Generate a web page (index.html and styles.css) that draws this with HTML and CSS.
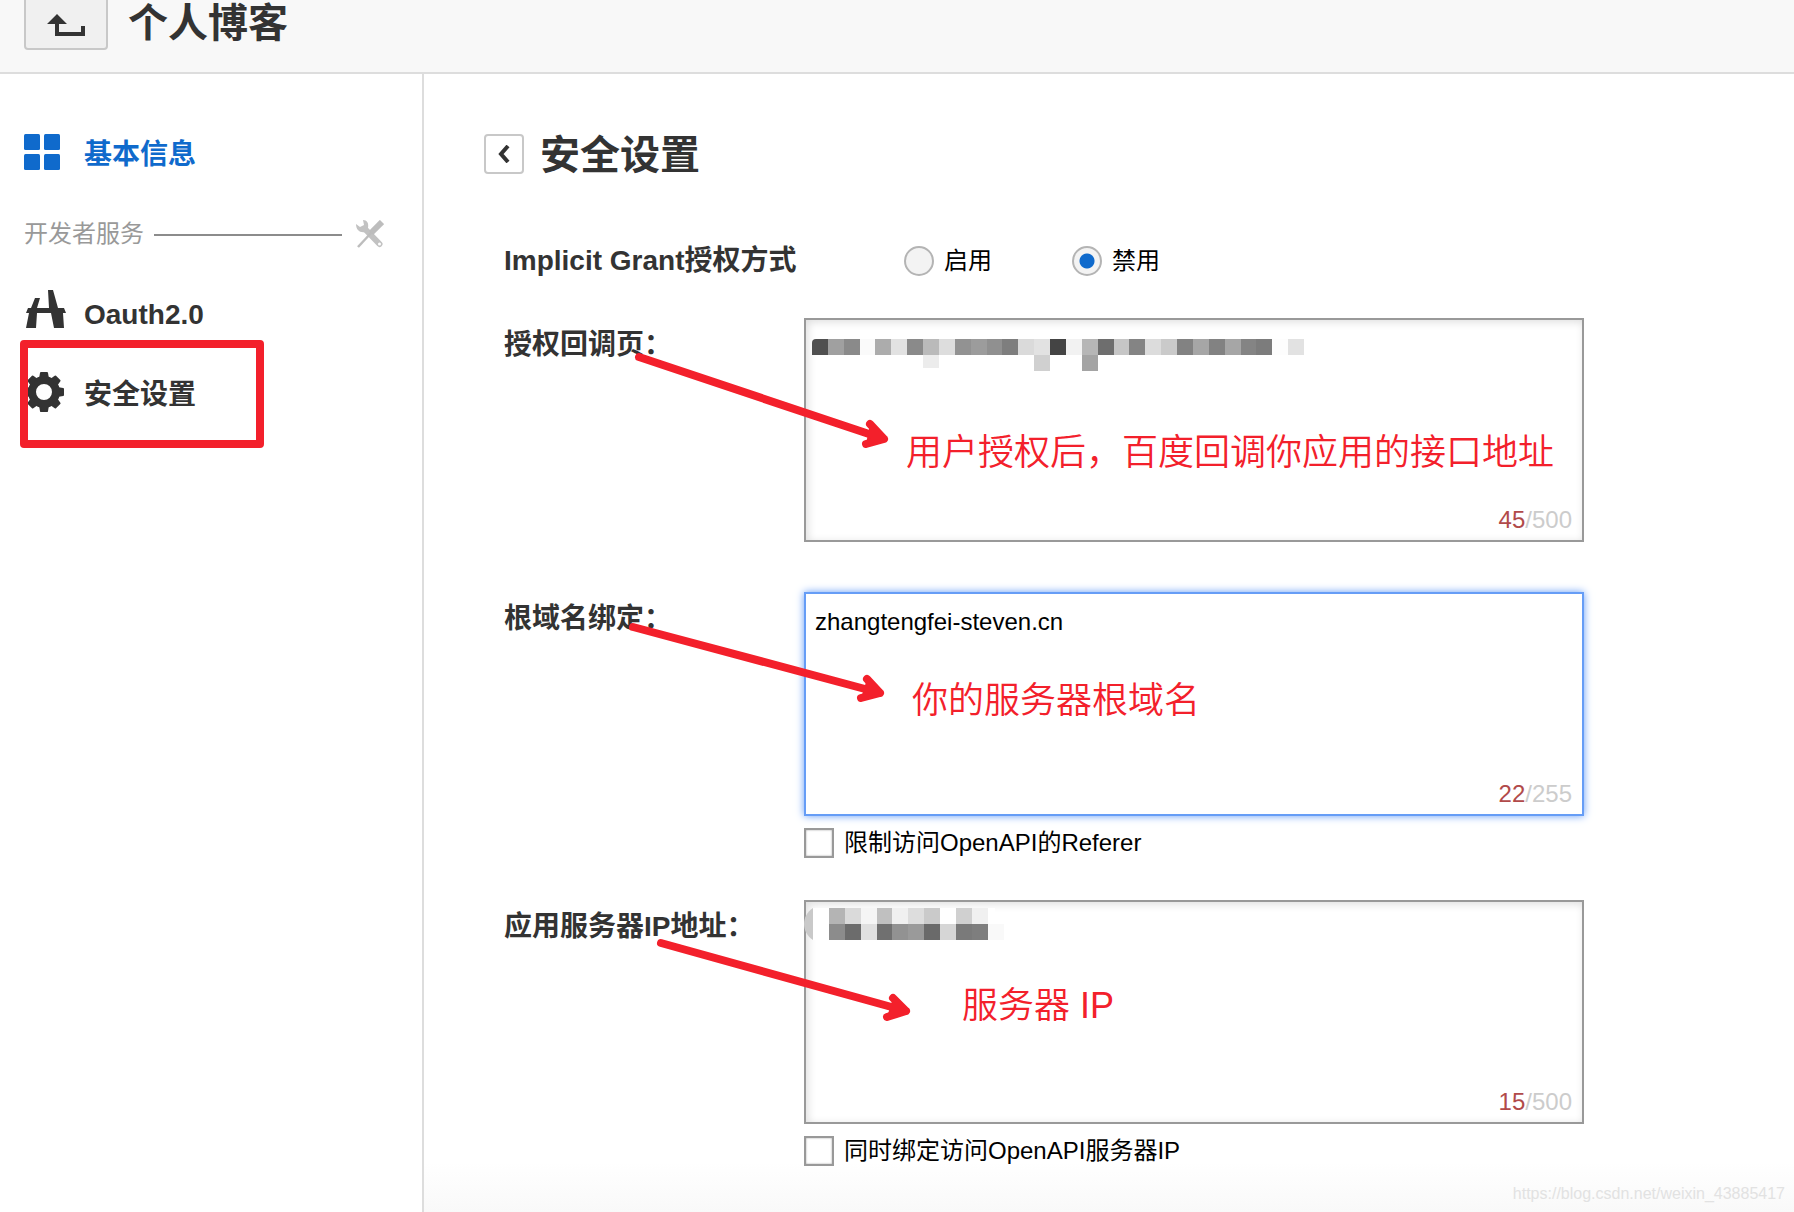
FILE: index.html
```html
<!DOCTYPE html>
<html lang="zh-CN">
<head>
<meta charset="utf-8">
<meta name="viewport" content="width=device-width, initial-scale=1">
<title>个人博客 - 安全设置</title>
<link rel="stylesheet" href="styles.css">
</head>
<body>
<header class="topbar">
  <button class="up-button" type="button" aria-label="返回上级">
    <svg width="38" height="22" viewBox="0 0 38 22" aria-hidden="true">
      <path d="M0 10 10 0l10 10h-8v8h22v-6H38v10H8V10z" fill="#333"/>
    </svg>
  </button>
  <h1 class="app-title">个人博客</h1>
</header>

<div class="layout">
  <nav class="sidebar">
    <a class="nav-item nav-item-active" href="#basic">
      <svg class="nav-icon" viewBox="0 0 48 48" aria-hidden="true" fill="#0f6acc">
        <rect x="0" y="4" width="16" height="16" rx="1.500"/>
        <rect x="20" y="4" width="16" height="16" rx="1.500"/>
        <rect x="0" y="24" width="16" height="16" rx="1.500"/>
        <rect x="20" y="24" width="16" height="16" rx="1.500"/>
      </svg>
      <span class="nav-text">基本信息</span>
    </a>
    <div class="nav-section">
      <span>开发者服务</span>
      <span class="nav-rule"></span>
      <svg width="28" height="28" viewBox="0 0 28 28" aria-hidden="true">
        <path d="M9 9 23.500 24" stroke="#c2c2c2" stroke-width="6" stroke-linecap="round"/>
        <path d="M0 4l4 3 4-2-1-5c4 0 6 3 5 8l-3 4C4 13 0 10 0 4z" fill="#c2c2c2"/>
        <circle cx="23.500" cy="24" r="1.500" fill="#fff"/>
        <path d="M26 2 15 13" stroke="#bdbdbd" stroke-width="6"/>
        <path d="M16 12 2 27" stroke="#bdbdbd" stroke-width="2.500"/>
      </svg>
    </div>
    <a class="nav-item" href="#oauth">
      <svg class="nav-icon" viewBox="0 0 48 48" aria-hidden="true" fill="#333">
        <path d="M4 18H7L11 8h5l-3 10h12L24 0h5l5 18h6l2 5h-3l1 15H30l-3-15H13l-1 15H2L5 23H2z"/>
      </svg>
      <span class="nav-text">Oauth2.0</span>
    </a>
    <div class="nav-marked">
      <a class="nav-item" href="#security">
        <svg class="nav-icon" viewBox="0 0 48 48" aria-hidden="true" fill="#333">
          <g transform="translate(20 22)">
            <circle r="12" fill="none" stroke="#333" stroke-width="8"/>
            <g id="teeth" stroke="#333" stroke-width="2" stroke-linejoin="round">
              <path d="M-4-13-3-19h6L4-13zM-4 13-3 19h6L4 13zM-13-4-19-3v6L-13 4zM13-4 19-3v6L13 4z"/>
            </g>
            <use href="#teeth" transform="rotate(45)"/>
          </g>
        </svg>
        <span class="nav-text">安全设置</span>
      </a>
      <span class="highlight-box"></span>
    </div>
  </nav>

  <main class="content">
    <div class="page-head">
      <button class="back-button" type="button" aria-label="返回">
        <svg width="12" height="18" viewBox="0 0 12 18" aria-hidden="true">
          <path d="M10 1 3 9l7 8" fill="none" stroke="#333" stroke-width="4"/>
        </svg>
      </button>
      <h2 class="page-title">安全设置</h2>
    </div>

    <form class="settings">
      <div class="row row-radio" role="radiogroup" aria-labelledby="grant-label">
        <span class="row-label row-label-inline" id="grant-label">Implicit Grant授权方式</span>
        <div class="radios">
          <label class="choice"><input class="radio" type="radio" name="grant" value="on">启用</label>
          <label class="choice"><input class="radio" type="radio" name="grant" value="off" checked>禁用</label>
        </div>
      </div>

      <div class="row row-spaced">
        <label class="row-label" for="callback">授权回调页：</label>
        <div class="field">
          <textarea class="textbox" id="callback"></textarea>
          <svg class="mosaic mosaic-callback" viewBox="0 0 31 2" preserveAspectRatio="none" shape-rendering="crispEdges" aria-hidden="true">
            <rect x="0" width="1" height="1" fill="#505050"/>
            <rect x="1" width="1" height="1" fill="#a0a0a0"/>
            <rect x="2" width="1" height="1" fill="#8a8a8a"/>
            <rect x="3" width="1" height="1" fill="#fafafa"/>
            <rect x="4" width="1" height="1" fill="#acacac"/>
            <rect x="5" width="1" height="1" fill="#e2e2e2"/>
            <rect x="6" width="1" height="1" fill="#8a8a8a"/>
            <rect x="7" width="1" height="1" fill="#bababa"/>
            <rect x="8" width="1" height="1" fill="#ddd"/>
            <rect x="9" width="1" height="1" fill="#929292"/>
            <rect x="10" width="1" height="1" fill="#9c9c9c"/>
            <rect x="11" width="1" height="1" fill="#909090"/>
            <rect x="12" width="1" height="1" fill="#7e7e7e"/>
            <rect x="13" width="1" height="1" fill="#dadada"/>
            <rect x="14" width="1" height="1" fill="#e2e2e2"/>
            <rect x="15" width="1" height="1" fill="#444"/>
            <rect x="16" width="1" height="1" fill="#f2f2f2"/>
            <rect x="17" width="1" height="1" fill="#b6b6b6"/>
            <rect x="18" width="1" height="1" fill="#6e6e6e"/>
            <rect x="19" width="1" height="1" fill="#c6c6c6"/>
            <rect x="20" width="1" height="1" fill="#848484"/>
            <rect x="21" width="1" height="1" fill="#dcdcdc"/>
            <rect x="22" width="1" height="1" fill="#cacaca"/>
            <rect x="23" width="1" height="1" fill="#828282"/>
            <rect x="24" width="1" height="1" fill="#a6a6a6"/>
            <rect x="25" width="1" height="1" fill="#828282"/>
            <rect x="26" width="1" height="1" fill="#a6a6a6"/>
            <rect x="27" width="1" height="1" fill="#848484"/>
            <rect x="28" width="1" height="1" fill="#7c7c7c"/>
            <rect x="29" width="1" height="1" fill="#fdfdfd"/>
            <rect x="30" width="1" height="1" fill="#e2e2e2"/>
            <rect x="7" y="1" width="1" height=".8" fill="#ececec"/>
            <rect x="14" y="1" width="1" height="1" fill="#d0d0d0"/>
            <rect x="17" y="1" width="1" height="1" fill="#a4a4a4"/>
          </svg>
          <span class="counter"><b class="count">45</b>/500</span>
          <span class="note note-callback">用户授权后，百度回调你应用的接口地址</span>
        </div>
        <svg class="arrow" viewBox="0 0 420 160" aria-hidden="true">
          <path d="M135 39 380 121M366 106l14 15-18 5"/>
        </svg>
      </div>

      <div class="row">
        <label class="row-label" for="domain">根域名绑定：</label>
        <div class="field">
          <textarea class="textbox textbox-focus" id="domain" spellcheck="false">zhangtengfei-steven.cn</textarea>
          <span class="counter"><b class="count">22</b>/255</span>
          <span class="note note-domain">你的服务器根域名</span>
        </div>
        <label class="choice choice-below"><input class="checkbox" type="checkbox">限制访问OpenAPI的Referer</label>
        <svg class="arrow" viewBox="0 0 420 160" aria-hidden="true">
          <path d="M129 35 376 101M363 87l13 14-19 5"/>
        </svg>
      </div>

      <div class="row">
        <label class="row-label" for="server-ip">应用服务器IP地址：</label>
        <div class="field">
          <textarea class="textbox" id="server-ip"></textarea>
          <svg class="mosaic mosaic-ip" viewBox="0 0 200 32" shape-rendering="crispEdges" aria-hidden="true">
            <rect x="9" width="182" height="32" fill="#fff"/>
            <path d="M9 0C-3 8-3 24 9 32z" fill="#c9c9c9" shape-rendering="auto"/>
            <g transform="translate(25 0) scale(15.87 16)">
              <rect x="0" width="1" height="1" fill="#b4b4b4"/>
              <rect x="1" width="1" height="1" fill="#dadada"/>
              <rect x="2" width="1" height="1" fill="#f5f5f5"/>
              <rect x="3" width="1" height="1" fill="#c0c0c0"/>
              <rect x="4" width="1" height="1" fill="#f0f0f0"/>
              <rect x="5" width="1" height="1" fill="#ddd"/>
              <rect x="6" width="1" height="1" fill="#cacaca"/>
              <rect x="8" width="1" height="1" fill="#d0d0d0"/>
              <rect x="9" width="1" height="1" fill="#f0f0f0"/>
              <rect x="0" y="1" width="1" height="1" fill="#8c8c8c"/>
              <rect x="1" y="1" width="1" height="1" fill="#6c6c6c"/>
              <rect x="2" y="1" width="1" height="1" fill="#e0e0e0"/>
              <rect x="3" y="1" width="1" height="1" fill="#707070"/>
              <rect x="4" y="1" width="1" height="1" fill="#929292"/>
              <rect x="5" y="1" width="1" height="1" fill="#9a9a9a"/>
              <rect x="6" y="1" width="1" height="1" fill="#6a6a6a"/>
              <rect x="7" y="1" width="1" height="1" fill="#d6d6d6"/>
              <rect x="8" y="1" width="1" height="1" fill="#7a7a7a"/>
              <rect x="9" y="1" width="1" height="1" fill="#7e7e7e"/>
              <rect x="10" y="1" width="1" height="1" fill="#f9f9f9"/>
            </g>
          </svg>
          <span class="counter"><b class="count">15</b>/500</span>
          <span class="note note-ip">服务器 IP</span>
        </div>
        <label class="choice choice-below"><input class="checkbox" type="checkbox">同时绑定访问OpenAPI服务器IP</label>
        <svg class="arrow" viewBox="0 0 420 160" aria-hidden="true">
          <path d="M157 43 402 111M389 98l13 13-19 6"/>
        </svg>
      </div>
    </form>
    <span class="watermark">https://blog.csdn.net/weixin_43885417</span>
  </main>
</div>
</body>
</html>
```

FILE: styles.css
```css
* {
  box-sizing: border-box;
}

body {
  display: flex;
  flex-direction: column;
  min-height: 100vh;
  margin: 0;
  background: #fff;
  color: #000;
  font-family: "Liberation Sans", "Noto Sans CJK SC", sans-serif;
  font-size: 24px;
  line-height: 36px;
}

button,
textarea {
  font: inherit;
}

/* Top bar */

.topbar {
  display: flex;
  align-items: flex-start;
  gap: 20px;
  height: 74px;
  padding: 0 24px;
  overflow: hidden;
  background: #f8f8f8;
  border-bottom: 2px solid #ddd;
}

.up-button {
  display: flex;
  align-items: flex-end;
  justify-content: center;
  width: 84px;
  height: 56px;
  margin: -6px 0 0;
  padding: 0 0 12px;
  background: #f0f0f0;
  border: 2px solid #c8c8c8;
  border-radius: 4px;
}

.app-title,
.page-title {
  margin: 0;
  color: #333;
  font-size: 40px;
  font-weight: bold;
  line-height: 46px;
}

/* Layout */

.layout {
  display: flex;
  flex: 1;
}

.sidebar {
  flex: 0 0 424px;
  padding: 40px 38px 0 24px;
  border-right: 2px solid #ddd;
}

.content {
  position: relative;
  flex: 1;
  min-width: 0;
  padding: 60px 60px 46px;
  background: linear-gradient(#fff, #f9f9f9) bottom / 100% 50px no-repeat;
}

/* Sidebar */

.nav-item {
  display: flex;
  align-items: center;
  gap: 12px;
  height: 80px;
  color: #333;
  font-size: 28px;
  font-weight: bold;
  text-decoration: none;
}

.nav-item-active {
  color: #0f6acc;
}

.nav-icon {
  flex: none;
  width: 48px;
  height: 48px;
}

.nav-text {
  padding-top: 2px;
}

.nav-section {
  display: flex;
  align-items: center;
  height: 80px;
  color: #999;
}

.nav-rule {
  flex: 1;
  height: 2px;
  margin: 2px 14px 0 10px;
  background: #8c8c8c;
}

.nav-marked {
  position: relative;
}

.highlight-box {
  position: absolute;
  top: -14px;
  left: -4px;
  width: 244px;
  height: 108px;
  border: 8px solid #f3202b;
  border-radius: 4px;
  pointer-events: none;
}

/* Page heading */

.page-head {
  display: flex;
  align-items: center;
  gap: 16px;
  height: 40px;
  margin-bottom: 72px;
}

.page-title {
  padding-top: 2px;
}

.back-button {
  display: grid;
  place-items: center;
  width: 40px;
  height: 40px;
  padding: 0;
  background: #fff;
  border: 2px solid #c8c8c8;
  border-radius: 4px;
}

/* Form */

.settings {
  display: flex;
  flex-direction: column;
  gap: 42px;
  padding-left: 20px;
}

.row {
  position: relative;
  display: grid;
  grid-template-columns: 300px minmax(0, 780px);
}

.row-radio {
  align-items: center;
}

.row-spaced {
  margin-bottom: 8px;
}

.row-label {
  padding-top: 9px;
  color: #333;
  font-size: 28px;
  font-weight: bold;
}

.row-label-inline {
  padding-top: 0;
  line-height: 30px;
  white-space: nowrap;
}

.radios {
  display: flex;
  gap: 80px;
  padding-left: 100px;
}

.choice {
  display: flex;
  align-items: center;
  gap: 10px;
  height: 30px;
}

.choice-below {
  grid-column: 2;
  margin-top: 12px;
}

.radio,
.checkbox {
  appearance: none;
  flex: none;
  width: 30px;
  height: 30px;
  margin: 0;
}

.radio {
  background: #f3f3f3;
  border: 2px solid #b4b4b4;
  border-radius: 50%;
}

.radio:checked {
  background: radial-gradient(circle, #0f6acc 7px, #f3f3f3 8px);
}

.checkbox {
  background: #fff;
  border: 2px solid #999;
  box-shadow: inset 0 0 2px #999;
}

.field {
  position: relative;
}

.textbox {
  display: block;
  width: 100%;
  height: 224px;
  padding: 10px 9px;
  resize: none;
  background: #fff;
  border: 2px solid #999;
  border-radius: 0;
  outline: none;
  box-shadow: inset 2px 2px 8px #ddd;
  color: #000;
}

.textbox-focus {
  border-color: #669df6;
  box-shadow: 0 0 8px #669df6;
}

.counter {
  position: absolute;
  right: 12px;
  bottom: 4px;
  color: #ccc;
}

.count {
  color: #b14a4a;
  font-weight: normal;
}

/* Annotations over the form */

.mosaic {
  position: absolute;
  height: 32px;
  pointer-events: none;
}

.mosaic-callback {
  top: 21px;
  left: 8px;
  width: 492px;
  border-radius: 4px 0 0 0;
}

.mosaic-ip {
  top: 8px;
  left: 0;
  width: 200px;
}

.note {
  position: absolute;
  color: #f3202b;
  font-family: "Liberation Sans", "Noto Sans CJK SC", sans-serif;
  font-size: 36px;
  font-weight: 350;
  line-height: 44px;
  white-space: nowrap;
  pointer-events: none;
}

.note-callback {
  top: 113px;
  left: 102px;
}

.note-domain {
  top: 87px;
  left: 108px;
}

.note-ip {
  top: 84px;
  left: 158px;
}

.arrow {
  position: absolute;
  top: 0;
  left: 0;
  width: 420px;
  height: 160px;
  fill: #f3202b;
  stroke: #f3202b;
  stroke-width: 8px;
  stroke-linecap: round;
  stroke-linejoin: round;
  pointer-events: none;
}

.watermark {
  position: absolute;
  right: 9px;
  bottom: 6px;
  color: #e2e2e2;
  font-size: 16px;
  line-height: 24px;
}
```
